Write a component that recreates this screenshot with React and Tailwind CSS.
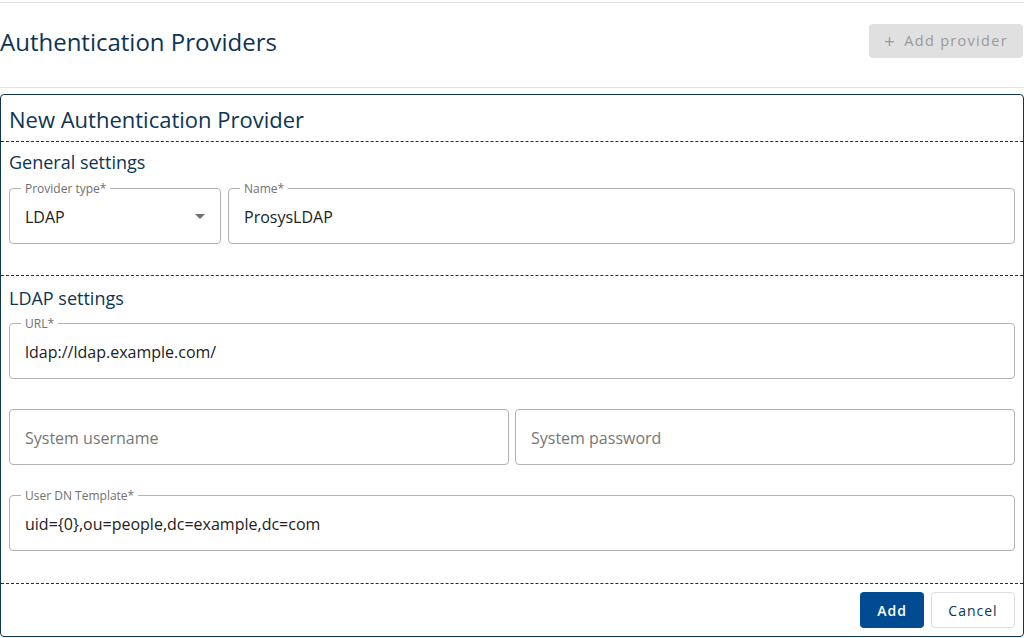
import React from "react";

function Field({ label, value, placeholder, select, className = "" }) {
  return (
    <div className={"relative h-[56px] rounded-[4px] border border-[#b3b3b3] flex items-center px-[15px] " + className}>
      {label && (
        <span className="absolute -top-[8px] left-[11px] bg-white px-[4px] text-[12px] leading-[15px] text-[#707070]">
          {label}
        </span>
      )}
      {value ? (
        <span className="text-[16px] text-[#222] mt-[1px]">{value}</span>
      ) : (
        <span className="text-[16px] text-[#777] mt-[1px]">{placeholder}</span>
      )}
      {select && (
        <svg className="ml-auto" width="10" height="5" viewBox="0 0 10 5">
          <path d="M0 0 L10 0 L5 5 Z" fill="#707070" />
        </svg>
      )}
    </div>
  );
}

function Dashed() {
  return <div className="border-t border-dashed border-[#0d3553]" />;
}

export default function App() {
  return (
    <div className="w-[1024px] h-[638px] bg-white overflow-hidden" style={{ fontFamily: '"Open Sans", sans-serif' }}>
      <div className="h-[3px] border-b border-[#e3e3e3]" />
      <div className="h-[85px] flex items-center justify-between border-b border-[#e3e3e3]">
        <h1 className="text-[24px] text-[#0d3553] leading-none -mt-[7px]">Authentication Providers</h1>
        <button className="h-[34px] w-[154px] -mt-[8px] mr-[1px] rounded-[4px] bg-[#e0e0e0] text-[#9a9a9a] text-[14.5px] tracking-[1.3px] flex items-center justify-center gap-[8px]">
          <span className="text-[19px] leading-none">+</span>
          <span>Add provider</span>
        </button>
      </div>
      <div className="mt-[6px] h-[543px] rounded-[4px] border border-[#0d3553] flex flex-col">
        <div className="h-[46px] flex items-center px-[8px]">
          <h2 className="text-[22px] text-[#0d3553] mt-[3px]">New Authentication Provider</h2>
        </div>
        <Dashed />
        <div className="px-[8px] pt-[8px]">
          <h3 className="text-[18px] leading-[24px] text-[#0d3553]">General settings</h3>
          <div className="flex gap-[7px] mt-[14px]">
            <Field label="Provider type*" value="LDAP" select className="w-[212px]" />
            <Field label="Name*" value="ProsysLDAP" className="flex-1" />
          </div>
        </div>
        <div className="mt-[31px]">
          <Dashed />
        </div>
        <div className="px-[8px] pt-[10px]">
          <h3 className="text-[18px] leading-[24px] text-[#0d3553]">LDAP settings</h3>
          <div className="mt-[13px] flex flex-col gap-[30px]">
            <Field label="URL*" value="ldap://ldap.example.com/" />
            <div className="flex gap-[6px]">
              <Field placeholder="System username" className="flex-1" />
              <Field placeholder="System password" className="flex-1" />
            </div>
            <Field label="User DN Template*" value="uid={0},ou=people,dc=example,dc=com" />
          </div>
        </div>
        <div className="mt-[32px]">
          <Dashed />
        </div>
        <div className="flex justify-end gap-[7px] px-[8px] pt-[8px]">
          <button className="h-[36px] w-[64px] rounded-[4px] bg-[#004a91] text-white text-[14px] tracking-[1px] font-semibold">Add</button>
          <button className="h-[36px] w-[84px] rounded-[4px] border border-[#ddd] bg-white text-[#0d3553] text-[14px] tracking-[1px]">Cancel</button>
        </div>
      </div>
    </div>
  );
}
